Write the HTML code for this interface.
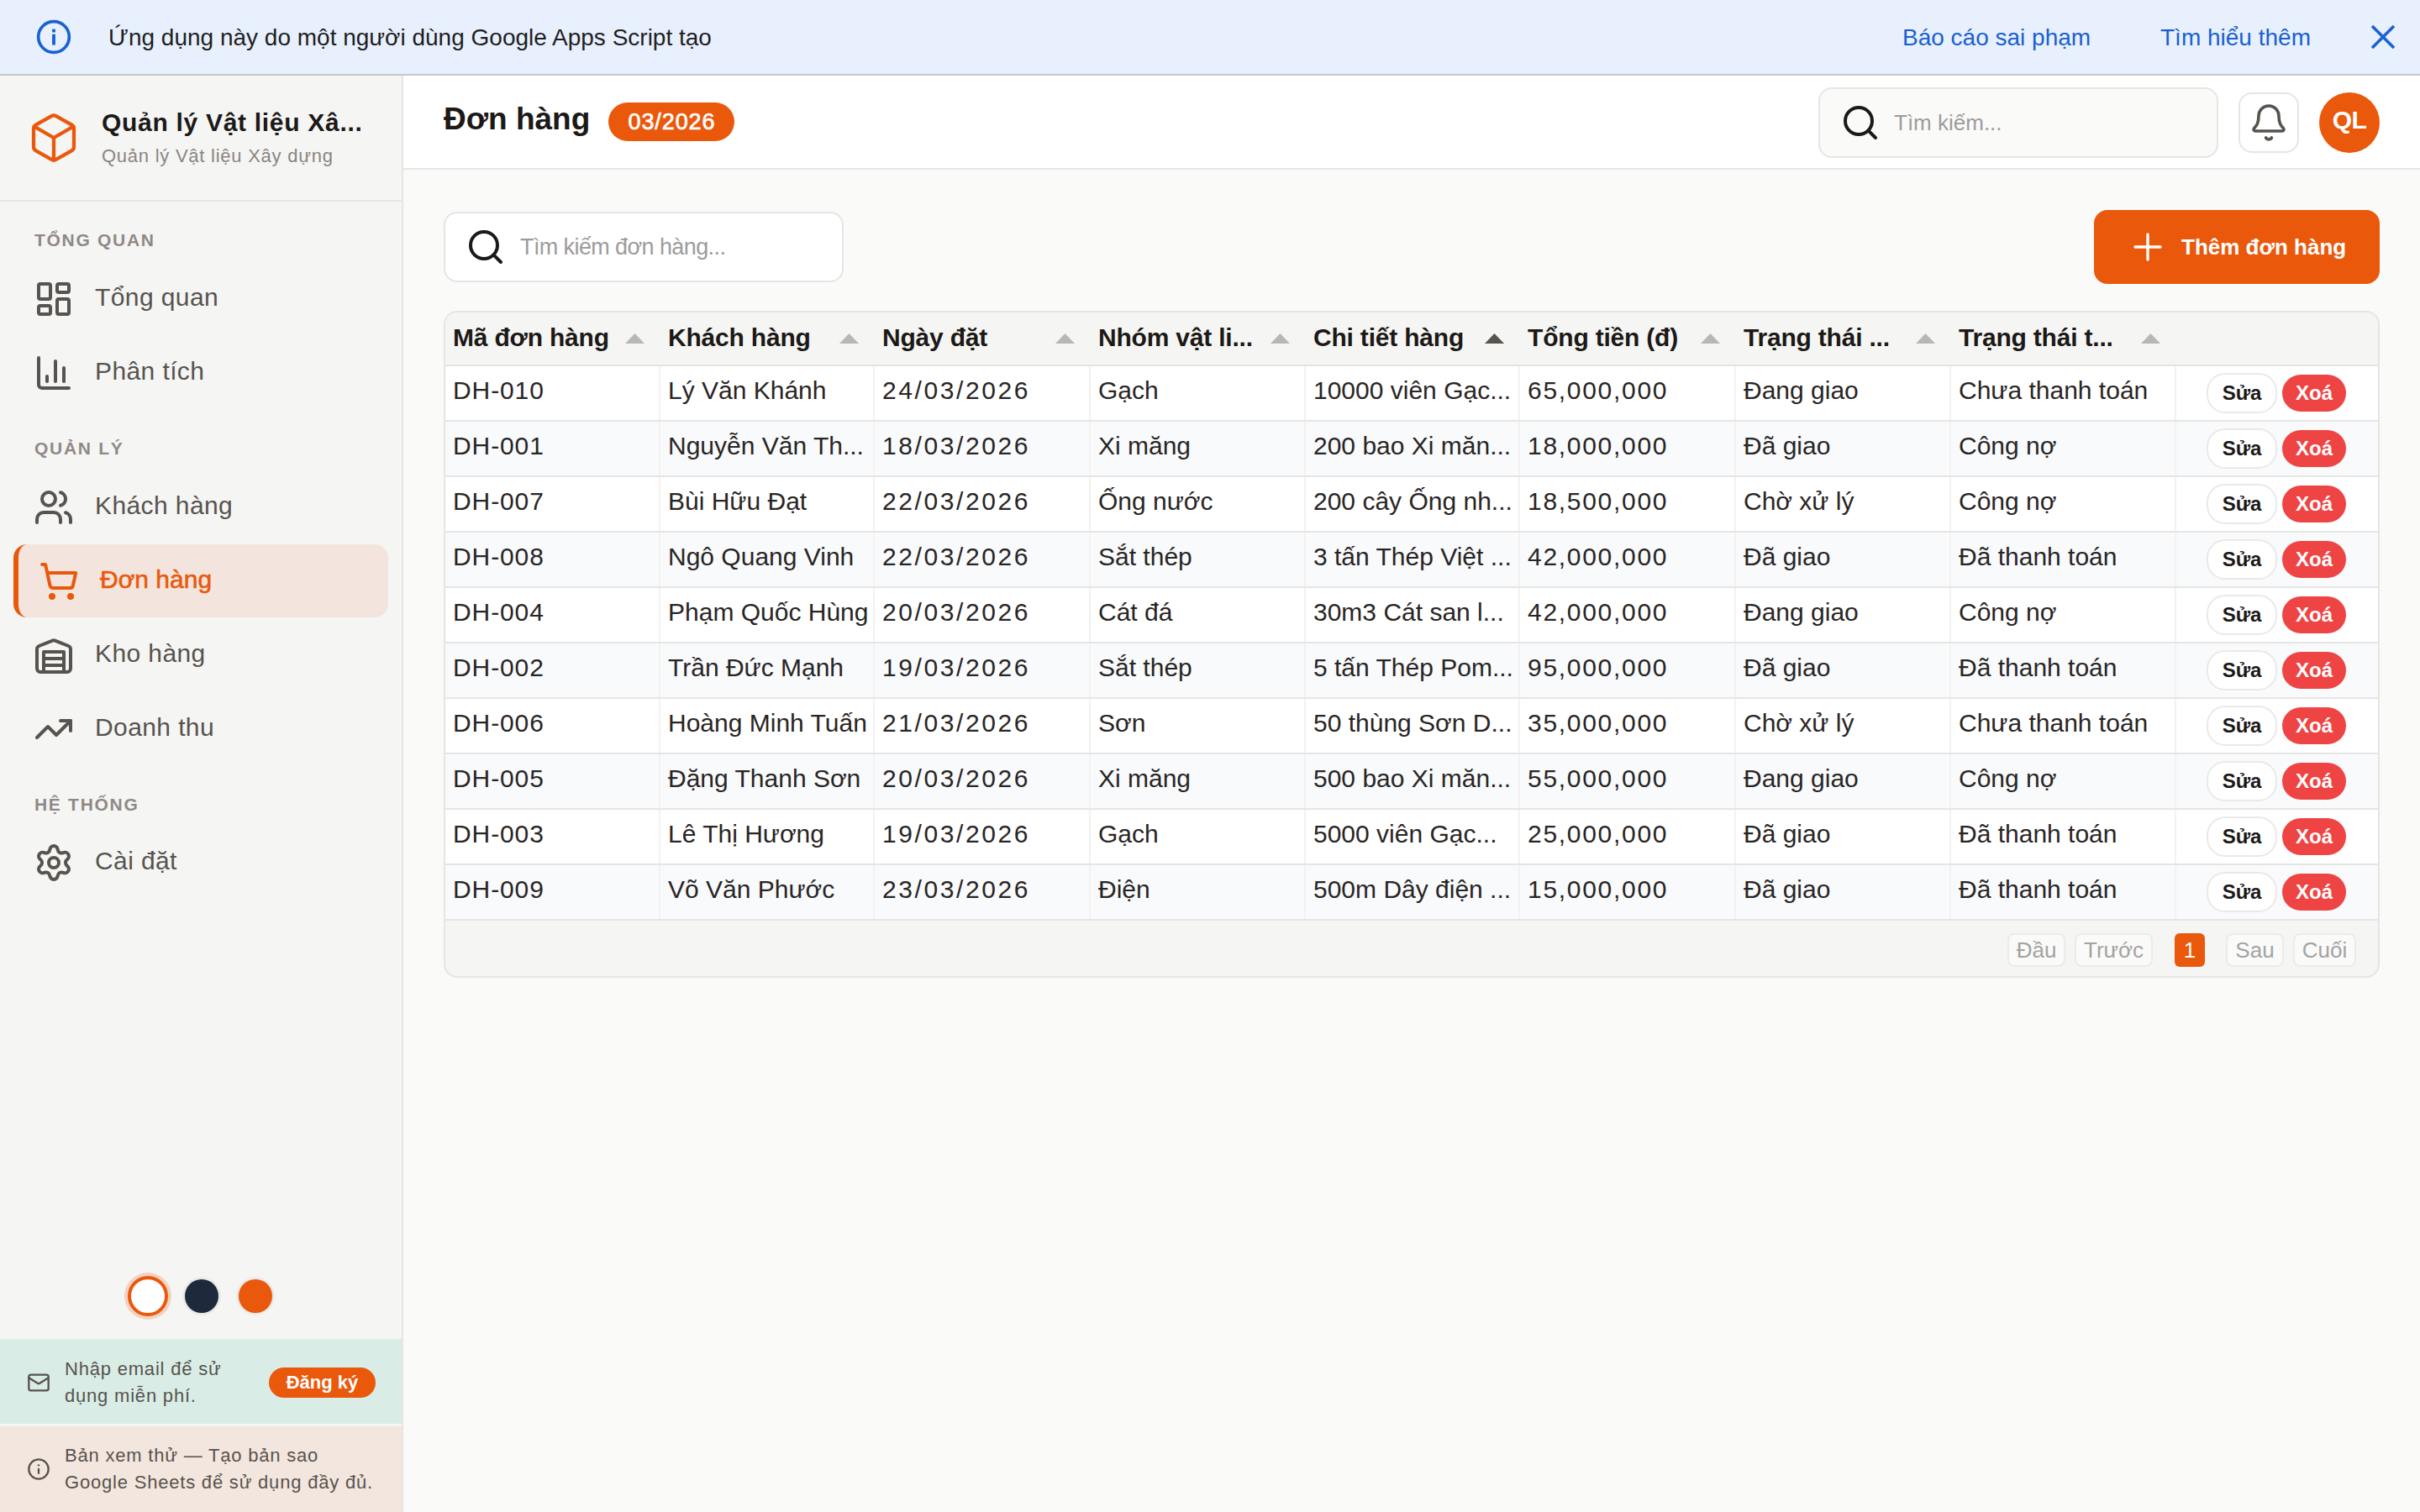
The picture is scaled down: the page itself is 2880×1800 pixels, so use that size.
<!DOCTYPE html>
<html><head><meta charset="utf-8">
<style>
*{box-sizing:border-box;margin:0;padding:0}
html,body{width:2880px;height:1800px;overflow:hidden;background:#fafaf9;font-family:"Liberation Sans",sans-serif;color:#1c1917}
.abs{position:absolute}
svg{display:block}
/* banner */
#banner{position:absolute;left:0;top:0;width:2880px;height:90px;background:#e8f0fe;border-bottom:2px solid #c5c7c9}
#banner .t{position:absolute;left:129px;top:28px;font-size:28px;line-height:34px;color:#1f1f1f;white-space:nowrap}
#banner .l{position:absolute;top:28px;font-size:28px;line-height:34px;color:#1a5fd1;white-space:nowrap}
/* sidebar */
#side{position:absolute;left:0;top:90px;width:480px;height:1710px;background:#f5f5f4;border-right:2px solid #e7e5e4}
#side .hd{position:absolute;left:0;top:0;width:478px;height:150px;border-bottom:2px solid #e7e5e4}
.sec{position:absolute;left:41px;font-size:21px;font-weight:bold;letter-spacing:1.7px;color:#8f8984;white-space:nowrap;line-height:24px}
.nav{position:absolute;left:16px;width:446px;height:88px}
.nav svg{position:absolute;left:24px;top:20px}
.nav .tx{position:absolute;left:97px;top:25px;font-size:30px;line-height:34px;color:#57534e;white-space:nowrap;letter-spacing:0.4px}
.nav.act{background:#f3e5dd;border-radius:16px;border-left:6px solid #ea580c;height:87px}
.nav.act svg{left:24px}
.nav.act .tx{left:97px;color:#ea580c;-webkit-text-stroke:0.6px #ea580c;letter-spacing:0}
/* main */
#hdr{position:absolute;left:480px;top:90px;width:2400px;height:112px;background:#fff;border-bottom:2px solid #e7e5e4}

.th{position:absolute;top:13px;font-size:30px;font-weight:bold;line-height:34px;color:#1c1917;white-space:nowrap;letter-spacing:-0.2px}
.td{position:absolute;font-size:30px;line-height:34px;color:#292524;white-space:nowrap}
.bs{position:absolute;left:2096px;width:84px;height:48px;border:2px solid #ebe9e7;border-radius:22px;background:#fff;font-size:24px;font-weight:bold;line-height:44px;text-align:center;color:#1c1917}
.bx{position:absolute;left:2186px;width:76px;height:44px;border-radius:22px;background:#ef4444;font-size:24px;font-weight:bold;line-height:44px;text-align:center;color:#fff}
.pg{position:absolute;height:40px;border:2px solid #ebebea;border-radius:8px;background:#fafaf9;font-size:26px;line-height:36px;text-align:center;color:#a3a3a3}
</style></head>
<body>
<div id="banner">
  <svg class="abs" style="left:42px;top:22px" width="44" height="44" viewBox="0 0 24 24" fill="none" stroke="#1a62d2" stroke-width="2"><circle cx="12" cy="12" r="10"/><rect x="10.95" y="10.2" width="2.1" height="7" fill="#1a62d2" stroke="none"/><rect x="10.95" y="6.9" width="2.1" height="2.1" fill="#1a62d2" stroke="none"/></svg>
  <div class="t">Ứng dụng này do một người dùng Google Apps Script tạo</div>
  <div class="l" style="left:2264px">Báo cáo sai phạm</div>
  <div class="l" style="left:2571px">Tìm hiểu thêm</div>
  <svg class="abs" style="left:2820px;top:28px" width="32" height="32" viewBox="0 0 32 32" stroke="#1a62d2" stroke-width="3.6"><path d="M3 3L29 29M29 3L3 29"/></svg>
</div>

<div id="side">
  <div class="hd">
    <svg class="abs" style="left:32px;top:42px" width="64" height="64" viewBox="0 0 24 24" fill="none" stroke="#ea580c" stroke-width="1.6" stroke-linecap="round" stroke-linejoin="round"><path d="M21 8a2 2 0 0 0-1-1.73l-7-4a2 2 0 0 0-2 0l-7 4A2 2 0 0 0 3 8v8a2 2 0 0 0 1 1.73l7 4a2 2 0 0 0 2 0l7-4A2 2 0 0 0 21 16Z"/><path d="m3.3 7 8.7 5 8.7-5"/><path d="M12 22V12"/></svg>
    <div class="abs" style="left:121px;top:39px;font-size:30px;font-weight:bold;line-height:34px;color:#1c1917;white-space:nowrap;letter-spacing:0.7px">Quản lý Vật liệu Xâ...</div>
    <div class="abs" style="left:121px;top:83px;font-size:22px;line-height:26px;color:#8b8580;white-space:nowrap;letter-spacing:0.75px">Quản lý Vật liệu Xây dựng</div>
  </div>
  <div class="sec" style="top:184px">TỔNG QUAN</div>
  <div class="nav" style="top:222px">
    <svg width="48" height="48" viewBox="0 0 24 24" fill="none" stroke="#57534e" stroke-width="2" stroke-linecap="round" stroke-linejoin="round"><rect width="7" height="9" x="3" y="3" rx="1"/><rect width="7" height="5" x="14" y="3" rx="1"/><rect width="7" height="9" x="14" y="12" rx="1"/><rect width="7" height="5" x="3" y="16" rx="1"/></svg>
    <div class="tx">Tổng quan</div>
  </div>
  <div class="nav" style="top:310px">
    <svg width="48" height="48" viewBox="0 0 24 24" fill="none" stroke="#57534e" stroke-width="2" stroke-linecap="round" stroke-linejoin="round"><path d="M3 3v16a2 2 0 0 0 2 2h16"/><path d="M18 17V9"/><path d="M13 17V5"/><path d="M8 17v-3"/></svg>
    <div class="tx">Phân tích</div>
  </div>
  <div class="sec" style="top:432px">QUẢN LÝ</div>
  <div class="nav" style="top:470px">
    <svg width="48" height="48" viewBox="0 0 24 24" fill="none" stroke="#57534e" stroke-width="2" stroke-linecap="round" stroke-linejoin="round"><path d="M16 21v-2a4 4 0 0 0-4-4H6a4 4 0 0 0-4 4v2"/><circle cx="9" cy="7" r="4"/><path d="M22 21v-2a4 4 0 0 0-3-3.87"/><path d="M16 3.13a4 4 0 0 1 0 7.75"/></svg>
    <div class="tx">Khách hàng</div>
  </div>
  <div class="nav act" style="top:558px">
    <svg width="48" height="48" viewBox="0 0 24 24" fill="none" stroke="#ea580c" stroke-width="2" stroke-linecap="round" stroke-linejoin="round"><circle cx="8" cy="21" r="1"/><circle cx="19" cy="21" r="1"/><path d="M2.05 2.05h2l2.66 12.42a2 2 0 0 0 2 1.58h9.78a2 2 0 0 0 1.95-1.57l1.65-7.43H5.12"/></svg>
    <div class="tx">Đơn hàng</div>
  </div>
  <div class="nav" style="top:646px">
    <svg width="48" height="48" viewBox="0 0 24 24" fill="none" stroke="#57534e" stroke-width="2" stroke-linecap="round" stroke-linejoin="round"><path d="M22 8.35V20a2 2 0 0 1-2 2H4a2 2 0 0 1-2-2V8.35A2 2 0 0 1 3.26 6.5l8-3.2a2 2 0 0 1 1.48 0l8 3.2A2 2 0 0 1 22 8.35Z"/><path d="M6 18h12"/><path d="M6 14h12"/><rect width="12" height="12" x="6" y="10"/></svg>
    <div class="tx">Kho hàng</div>
  </div>
  <div class="nav" style="top:734px">
    <svg width="48" height="48" viewBox="0 0 24 24" fill="none" stroke="#57534e" stroke-width="2" stroke-linecap="round" stroke-linejoin="round"><polyline points="22 7 13.5 15.5 8.5 10.5 2 17"/><polyline points="16 7 22 7 22 13"/></svg>
    <div class="tx">Doanh thu</div>
  </div>
  <div class="sec" style="top:856px">HỆ THỐNG</div>
  <div class="nav" style="top:893px">
    <svg width="48" height="48" viewBox="0 0 24 24" fill="none" stroke="#57534e" stroke-width="2" stroke-linecap="round" stroke-linejoin="round"><path d="M9.671 4.136a2.34 2.34 0 0 1 4.659 0 2.34 2.34 0 0 0 3.319 1.915 2.34 2.34 0 0 1 2.33 4.033 2.34 2.34 0 0 0 0 3.831 2.34 2.34 0 0 1-2.33 4.033 2.34 2.34 0 0 0-3.319 1.915 2.34 2.34 0 0 1-4.659 0 2.34 2.34 0 0 0-3.32-1.915 2.34 2.34 0 0 1-2.33-4.033 2.34 2.34 0 0 0 0-3.831A2.34 2.34 0 0 1 6.35 6.051a2.34 2.34 0 0 0 3.319-1.915"/><circle cx="12" cy="12" r="3"/></svg>
    <div class="tx">Cài đặt</div>
  </div>

  <div class="abs" style="left:152px;top:1429px;width:48px;height:48px;border-radius:50%;background:#fff;border:4px solid #ea580c;box-shadow:0 0 0 4px rgba(234,88,12,0.22)"></div>
  <div class="abs" style="left:220px;top:1433px;width:40px;height:40px;border-radius:50%;background:#1e293b;box-shadow:0 0 3px 2px rgba(0,0,0,0.08)"></div>
  <div class="abs" style="left:284px;top:1433px;width:40px;height:40px;border-radius:50%;background:#ea580c;box-shadow:0 0 3px 2px rgba(0,0,0,0.08)"></div>
  <div class="abs" style="left:0;top:1504px;width:478px;height:101px;background:#d9ede6">
    <svg class="abs" style="left:32px;top:38px" width="28" height="28" viewBox="0 0 24 24" fill="none" stroke="#57534e" stroke-width="2" stroke-linecap="round" stroke-linejoin="round"><rect width="20" height="16" x="2" y="4" rx="2"/><path d="m22 7-8.97 5.7a1.94 1.94 0 0 1-2.06 0L2 7"/></svg>
    <div class="abs" style="left:77px;top:20px;font-size:22px;line-height:32px;color:#57534e;width:260px;letter-spacing:0.8px">Nhập email để sử<br>dụng miễn phí.</div>
    <div class="abs" style="left:320px;top:34px;width:127px;height:36px;border-radius:18px;background:#ea580c;color:#fff;font-size:22px;font-weight:bold;line-height:36px;text-align:center">Đăng ký</div>
  </div>
  <div class="abs" style="left:0;top:1605px;width:478px;height:3px;background:#f5f5f4"></div>
  <div class="abs" style="left:0;top:1608px;width:478px;height:102px;background:#f3e6de">
    <svg class="abs" style="left:32px;top:37px" width="28" height="28" viewBox="0 0 24 24" fill="none" stroke="#57534e" stroke-width="2" stroke-linecap="round" stroke-linejoin="round"><circle cx="12" cy="12" r="10"/><path d="M12 16v-4"/><path d="M12 8h.01"/></svg>
    <div class="abs" style="left:77px;top:19px;font-size:22px;line-height:32px;color:#57534e;white-space:nowrap;letter-spacing:0.8px">Bản xem thử — Tạo bản sao<br>Google Sheets để sử dụng đầy đủ.</div>
  </div>
</div>


<div id="hdr">
  <div class="abs" style="left:48px;top:30px;font-size:37px;font-weight:bold;line-height:44px;color:#1c1917;white-space:nowrap">Đơn hàng</div>
  <div class="abs" style="left:244px;top:32px;width:150px;height:46px;border-radius:23px;background:#ea580c;color:#fff;font-size:27px;line-height:46px;text-align:center;letter-spacing:0.9px;text-indent:0.9px;-webkit-text-stroke:0.7px #fff">03/2026</div>
  <div class="abs" style="left:1684px;top:14px;width:476px;height:84px;border-radius:16px;background:#fafaf9;border:2px solid #e7e5e4">
    <svg class="abs" style="left:24px;top:16px" width="48" height="48" viewBox="0 0 24 24" fill="none" stroke="#1c1917" stroke-width="2" stroke-linecap="round" stroke-linejoin="round"><circle cx="11" cy="11" r="8"/><path d="m21 21-4.3-4.3"/></svg>
    <div class="abs" style="left:88px;top:24px;font-size:26px;line-height:32px;color:#9c9c9c;white-space:nowrap">Tìm kiếm...</div>
  </div>
  <div class="abs" style="left:2184px;top:20px;width:72px;height:72px;border-radius:16px;background:#fff;border:2px solid #e7e5e4">
    <svg class="abs" style="left:10px;top:10px" width="48" height="48" viewBox="0 0 24 24" fill="none" stroke="#57534e" stroke-width="1.8" stroke-linecap="round" stroke-linejoin="round"><path d="M10.268 21a2 2 0 0 0 3.464 0"/><path d="M3.262 15.326A1 1 0 0 0 4 17h16a1 1 0 0 0 .74-1.673C19.41 13.956 18 12.499 18 8A6 6 0 0 0 6 8c0 4.499-1.411 5.956-2.738 7.326"/></svg>
  </div>
  <div class="abs" style="left:2280px;top:20px;width:72px;height:72px;border-radius:50%;background:#ea580c;color:#fff;font-size:30px;font-weight:bold;line-height:66px;text-align:center;letter-spacing:-0.5px">QL</div>
</div>

<div class="abs" style="left:528px;top:252px;width:476px;height:84px;border-radius:16px;background:#fff;border:2px solid #e7e5e4">
  <svg class="abs" style="left:24px;top:16px" width="48" height="48" viewBox="0 0 24 24" fill="none" stroke="#1c1917" stroke-width="2" stroke-linecap="round" stroke-linejoin="round"><circle cx="11" cy="11" r="8"/><path d="m21 21-4.3-4.3"/></svg>
  <div class="abs" style="left:89px;top:24px;font-size:27px;line-height:32px;color:#9c9c9c;white-space:nowrap;letter-spacing:-0.6px">Tìm kiếm đơn hàng...</div>
</div>
<div class="abs" style="left:2492px;top:250px;width:340px;height:88px;border-radius:16px;background:#ea580c;color:#fff">
  <svg class="abs" style="left:44px;top:24px" width="40" height="40" viewBox="0 0 24 24" fill="none" stroke="#fff" stroke-width="2" stroke-linecap="round"><path d="M12 3v18M3 12h18"/></svg>
  <div class="abs" style="left:104px;top:28px;font-size:26px;font-weight:bold;line-height:32px;white-space:nowrap">Thêm đơn hàng</div>
</div>

<div id="tbl" style="position:absolute;left:528px;top:370px;width:2304px;height:794px;border:2px solid #e7e5e4;border-radius:16px;overflow:hidden;background:#f5f5f4">
<div class="abs" style="left:0;top:0;width:2300px;height:64px;background:#f5f5f4;border-bottom:2px solid #e7e5e4"></div>
<div class="th" style="left:9px">Mã đơn hàng</div>
<svg class="abs" style="left:214px;top:25px" width="23" height="12" viewBox="0 0 23 12"><path d="M11.5 0L23 12H0Z" fill="#b9b7b5"/></svg>
<div class="th" style="left:265px">Khách hàng</div>
<svg class="abs" style="left:469px;top:25px" width="23" height="12" viewBox="0 0 23 12"><path d="M11.5 0L23 12H0Z" fill="#b9b7b5"/></svg>
<div class="th" style="left:520px">Ngày đặt</div>
<svg class="abs" style="left:726px;top:25px" width="23" height="12" viewBox="0 0 23 12"><path d="M11.5 0L23 12H0Z" fill="#b9b7b5"/></svg>
<div class="th" style="left:777px">Nhóm vật li...</div>
<svg class="abs" style="left:982px;top:25px" width="23" height="12" viewBox="0 0 23 12"><path d="M11.5 0L23 12H0Z" fill="#b9b7b5"/></svg>
<div class="th" style="left:1033px">Chi tiết hàng</div>
<svg class="abs" style="left:1237px;top:25px" width="23" height="12" viewBox="0 0 23 12"><path d="M11.5 0L23 12H0Z" fill="#57534e"/></svg>
<div class="th" style="left:1288px">Tổng tiền (đ)</div>
<svg class="abs" style="left:1494px;top:25px" width="23" height="12" viewBox="0 0 23 12"><path d="M11.5 0L23 12H0Z" fill="#b9b7b5"/></svg>
<div class="th" style="left:1545px">Trạng thái ...</div>
<svg class="abs" style="left:1750px;top:25px" width="23" height="12" viewBox="0 0 23 12"><path d="M11.5 0L23 12H0Z" fill="#b9b7b5"/></svg>
<div class="th" style="left:1801px">Trạng thái t...</div>
<svg class="abs" style="left:2018px;top:25px" width="23" height="12" viewBox="0 0 23 12"><path d="M11.5 0L23 12H0Z" fill="#b9b7b5"/></svg>
<div class="abs" style="left:0;top:64px;width:2300px;height:66px;background:#fff;border-bottom:2px solid #e7e5e4"></div>
<div class="abs" style="left:254px;top:64px;width:2px;height:64px;background:#f3f2f1"></div>
<div class="abs" style="left:509px;top:64px;width:2px;height:64px;background:#f3f2f1"></div>
<div class="abs" style="left:766px;top:64px;width:2px;height:64px;background:#f3f2f1"></div>
<div class="abs" style="left:1022px;top:64px;width:2px;height:64px;background:#f3f2f1"></div>
<div class="abs" style="left:1277px;top:64px;width:2px;height:64px;background:#f3f2f1"></div>
<div class="abs" style="left:1534px;top:64px;width:2px;height:64px;background:#f3f2f1"></div>
<div class="abs" style="left:1790px;top:64px;width:2px;height:64px;background:#f3f2f1"></div>
<div class="abs" style="left:2058px;top:64px;width:2px;height:64px;background:#f3f2f1"></div>
<div class="td" style="letter-spacing:0.9px;left:9px;top:76px">DH-010</div>
<div class="td" style="left:265px;top:76px">Lý Văn Khánh</div>
<div class="td" style="letter-spacing:2.6px;left:520px;top:76px">24/03/2026</div>
<div class="td" style="left:777px;top:76px">Gạch</div>
<div class="td" style="left:1033px;top:76px">10000 viên Gạc...</div>
<div class="td" style="letter-spacing:1.7px;left:1288px;top:76px">65,000,000</div>
<div class="td" style="left:1545px;top:76px">Đang giao</div>
<div class="td" style="left:1801px;top:76px">Chưa thanh toán</div>
<div class="bs" style="top:72px">Sửa</div>
<div class="bx" style="top:74px">Xoá</div>
<div class="abs" style="left:0;top:130px;width:2300px;height:66px;background:#f8fafc;border-bottom:2px solid #e7e5e4"></div>
<div class="abs" style="left:254px;top:130px;width:2px;height:64px;background:#f3f2f1"></div>
<div class="abs" style="left:509px;top:130px;width:2px;height:64px;background:#f3f2f1"></div>
<div class="abs" style="left:766px;top:130px;width:2px;height:64px;background:#f3f2f1"></div>
<div class="abs" style="left:1022px;top:130px;width:2px;height:64px;background:#f3f2f1"></div>
<div class="abs" style="left:1277px;top:130px;width:2px;height:64px;background:#f3f2f1"></div>
<div class="abs" style="left:1534px;top:130px;width:2px;height:64px;background:#f3f2f1"></div>
<div class="abs" style="left:1790px;top:130px;width:2px;height:64px;background:#f3f2f1"></div>
<div class="abs" style="left:2058px;top:130px;width:2px;height:64px;background:#f3f2f1"></div>
<div class="td" style="letter-spacing:0.9px;left:9px;top:142px">DH-001</div>
<div class="td" style="left:265px;top:142px">Nguyễn Văn Th...</div>
<div class="td" style="letter-spacing:2.6px;left:520px;top:142px">18/03/2026</div>
<div class="td" style="left:777px;top:142px">Xi măng</div>
<div class="td" style="left:1033px;top:142px">200 bao Xi măn...</div>
<div class="td" style="letter-spacing:1.7px;left:1288px;top:142px">18,000,000</div>
<div class="td" style="left:1545px;top:142px">Đã giao</div>
<div class="td" style="left:1801px;top:142px">Công nợ</div>
<div class="bs" style="top:138px">Sửa</div>
<div class="bx" style="top:140px">Xoá</div>
<div class="abs" style="left:0;top:196px;width:2300px;height:66px;background:#fff;border-bottom:2px solid #e7e5e4"></div>
<div class="abs" style="left:254px;top:196px;width:2px;height:64px;background:#f3f2f1"></div>
<div class="abs" style="left:509px;top:196px;width:2px;height:64px;background:#f3f2f1"></div>
<div class="abs" style="left:766px;top:196px;width:2px;height:64px;background:#f3f2f1"></div>
<div class="abs" style="left:1022px;top:196px;width:2px;height:64px;background:#f3f2f1"></div>
<div class="abs" style="left:1277px;top:196px;width:2px;height:64px;background:#f3f2f1"></div>
<div class="abs" style="left:1534px;top:196px;width:2px;height:64px;background:#f3f2f1"></div>
<div class="abs" style="left:1790px;top:196px;width:2px;height:64px;background:#f3f2f1"></div>
<div class="abs" style="left:2058px;top:196px;width:2px;height:64px;background:#f3f2f1"></div>
<div class="td" style="letter-spacing:0.9px;left:9px;top:208px">DH-007</div>
<div class="td" style="left:265px;top:208px">Bùi Hữu Đạt</div>
<div class="td" style="letter-spacing:2.6px;left:520px;top:208px">22/03/2026</div>
<div class="td" style="left:777px;top:208px">Ống nước</div>
<div class="td" style="left:1033px;top:208px">200 cây Ống nh...</div>
<div class="td" style="letter-spacing:1.7px;left:1288px;top:208px">18,500,000</div>
<div class="td" style="left:1545px;top:208px">Chờ xử lý</div>
<div class="td" style="left:1801px;top:208px">Công nợ</div>
<div class="bs" style="top:204px">Sửa</div>
<div class="bx" style="top:206px">Xoá</div>
<div class="abs" style="left:0;top:262px;width:2300px;height:66px;background:#f8fafc;border-bottom:2px solid #e7e5e4"></div>
<div class="abs" style="left:254px;top:262px;width:2px;height:64px;background:#f3f2f1"></div>
<div class="abs" style="left:509px;top:262px;width:2px;height:64px;background:#f3f2f1"></div>
<div class="abs" style="left:766px;top:262px;width:2px;height:64px;background:#f3f2f1"></div>
<div class="abs" style="left:1022px;top:262px;width:2px;height:64px;background:#f3f2f1"></div>
<div class="abs" style="left:1277px;top:262px;width:2px;height:64px;background:#f3f2f1"></div>
<div class="abs" style="left:1534px;top:262px;width:2px;height:64px;background:#f3f2f1"></div>
<div class="abs" style="left:1790px;top:262px;width:2px;height:64px;background:#f3f2f1"></div>
<div class="abs" style="left:2058px;top:262px;width:2px;height:64px;background:#f3f2f1"></div>
<div class="td" style="letter-spacing:0.9px;left:9px;top:274px">DH-008</div>
<div class="td" style="left:265px;top:274px">Ngô Quang Vinh</div>
<div class="td" style="letter-spacing:2.6px;left:520px;top:274px">22/03/2026</div>
<div class="td" style="left:777px;top:274px">Sắt thép</div>
<div class="td" style="left:1033px;top:274px">3 tấn Thép Việt ...</div>
<div class="td" style="letter-spacing:1.7px;left:1288px;top:274px">42,000,000</div>
<div class="td" style="left:1545px;top:274px">Đã giao</div>
<div class="td" style="left:1801px;top:274px">Đã thanh toán</div>
<div class="bs" style="top:270px">Sửa</div>
<div class="bx" style="top:272px">Xoá</div>
<div class="abs" style="left:0;top:328px;width:2300px;height:66px;background:#fff;border-bottom:2px solid #e7e5e4"></div>
<div class="abs" style="left:254px;top:328px;width:2px;height:64px;background:#f3f2f1"></div>
<div class="abs" style="left:509px;top:328px;width:2px;height:64px;background:#f3f2f1"></div>
<div class="abs" style="left:766px;top:328px;width:2px;height:64px;background:#f3f2f1"></div>
<div class="abs" style="left:1022px;top:328px;width:2px;height:64px;background:#f3f2f1"></div>
<div class="abs" style="left:1277px;top:328px;width:2px;height:64px;background:#f3f2f1"></div>
<div class="abs" style="left:1534px;top:328px;width:2px;height:64px;background:#f3f2f1"></div>
<div class="abs" style="left:1790px;top:328px;width:2px;height:64px;background:#f3f2f1"></div>
<div class="abs" style="left:2058px;top:328px;width:2px;height:64px;background:#f3f2f1"></div>
<div class="td" style="letter-spacing:0.9px;left:9px;top:340px">DH-004</div>
<div class="td" style="left:265px;top:340px">Phạm Quốc Hùng</div>
<div class="td" style="letter-spacing:2.6px;left:520px;top:340px">20/03/2026</div>
<div class="td" style="left:777px;top:340px">Cát đá</div>
<div class="td" style="left:1033px;top:340px">30m3 Cát san l...</div>
<div class="td" style="letter-spacing:1.7px;left:1288px;top:340px">42,000,000</div>
<div class="td" style="left:1545px;top:340px">Đang giao</div>
<div class="td" style="left:1801px;top:340px">Công nợ</div>
<div class="bs" style="top:336px">Sửa</div>
<div class="bx" style="top:338px">Xoá</div>
<div class="abs" style="left:0;top:394px;width:2300px;height:66px;background:#f8fafc;border-bottom:2px solid #e7e5e4"></div>
<div class="abs" style="left:254px;top:394px;width:2px;height:64px;background:#f3f2f1"></div>
<div class="abs" style="left:509px;top:394px;width:2px;height:64px;background:#f3f2f1"></div>
<div class="abs" style="left:766px;top:394px;width:2px;height:64px;background:#f3f2f1"></div>
<div class="abs" style="left:1022px;top:394px;width:2px;height:64px;background:#f3f2f1"></div>
<div class="abs" style="left:1277px;top:394px;width:2px;height:64px;background:#f3f2f1"></div>
<div class="abs" style="left:1534px;top:394px;width:2px;height:64px;background:#f3f2f1"></div>
<div class="abs" style="left:1790px;top:394px;width:2px;height:64px;background:#f3f2f1"></div>
<div class="abs" style="left:2058px;top:394px;width:2px;height:64px;background:#f3f2f1"></div>
<div class="td" style="letter-spacing:0.9px;left:9px;top:406px">DH-002</div>
<div class="td" style="left:265px;top:406px">Trần Đức Mạnh</div>
<div class="td" style="letter-spacing:2.6px;left:520px;top:406px">19/03/2026</div>
<div class="td" style="left:777px;top:406px">Sắt thép</div>
<div class="td" style="left:1033px;top:406px">5 tấn Thép Pom...</div>
<div class="td" style="letter-spacing:1.7px;left:1288px;top:406px">95,000,000</div>
<div class="td" style="left:1545px;top:406px">Đã giao</div>
<div class="td" style="left:1801px;top:406px">Đã thanh toán</div>
<div class="bs" style="top:402px">Sửa</div>
<div class="bx" style="top:404px">Xoá</div>
<div class="abs" style="left:0;top:460px;width:2300px;height:66px;background:#fff;border-bottom:2px solid #e7e5e4"></div>
<div class="abs" style="left:254px;top:460px;width:2px;height:64px;background:#f3f2f1"></div>
<div class="abs" style="left:509px;top:460px;width:2px;height:64px;background:#f3f2f1"></div>
<div class="abs" style="left:766px;top:460px;width:2px;height:64px;background:#f3f2f1"></div>
<div class="abs" style="left:1022px;top:460px;width:2px;height:64px;background:#f3f2f1"></div>
<div class="abs" style="left:1277px;top:460px;width:2px;height:64px;background:#f3f2f1"></div>
<div class="abs" style="left:1534px;top:460px;width:2px;height:64px;background:#f3f2f1"></div>
<div class="abs" style="left:1790px;top:460px;width:2px;height:64px;background:#f3f2f1"></div>
<div class="abs" style="left:2058px;top:460px;width:2px;height:64px;background:#f3f2f1"></div>
<div class="td" style="letter-spacing:0.9px;left:9px;top:472px">DH-006</div>
<div class="td" style="left:265px;top:472px">Hoàng Minh Tuấn</div>
<div class="td" style="letter-spacing:2.6px;left:520px;top:472px">21/03/2026</div>
<div class="td" style="left:777px;top:472px">Sơn</div>
<div class="td" style="left:1033px;top:472px">50 thùng Sơn D...</div>
<div class="td" style="letter-spacing:1.7px;left:1288px;top:472px">35,000,000</div>
<div class="td" style="left:1545px;top:472px">Chờ xử lý</div>
<div class="td" style="left:1801px;top:472px">Chưa thanh toán</div>
<div class="bs" style="top:468px">Sửa</div>
<div class="bx" style="top:470px">Xoá</div>
<div class="abs" style="left:0;top:526px;width:2300px;height:66px;background:#f8fafc;border-bottom:2px solid #e7e5e4"></div>
<div class="abs" style="left:254px;top:526px;width:2px;height:64px;background:#f3f2f1"></div>
<div class="abs" style="left:509px;top:526px;width:2px;height:64px;background:#f3f2f1"></div>
<div class="abs" style="left:766px;top:526px;width:2px;height:64px;background:#f3f2f1"></div>
<div class="abs" style="left:1022px;top:526px;width:2px;height:64px;background:#f3f2f1"></div>
<div class="abs" style="left:1277px;top:526px;width:2px;height:64px;background:#f3f2f1"></div>
<div class="abs" style="left:1534px;top:526px;width:2px;height:64px;background:#f3f2f1"></div>
<div class="abs" style="left:1790px;top:526px;width:2px;height:64px;background:#f3f2f1"></div>
<div class="abs" style="left:2058px;top:526px;width:2px;height:64px;background:#f3f2f1"></div>
<div class="td" style="letter-spacing:0.9px;left:9px;top:538px">DH-005</div>
<div class="td" style="left:265px;top:538px">Đặng Thanh Sơn</div>
<div class="td" style="letter-spacing:2.6px;left:520px;top:538px">20/03/2026</div>
<div class="td" style="left:777px;top:538px">Xi măng</div>
<div class="td" style="left:1033px;top:538px">500 bao Xi măn...</div>
<div class="td" style="letter-spacing:1.7px;left:1288px;top:538px">55,000,000</div>
<div class="td" style="left:1545px;top:538px">Đang giao</div>
<div class="td" style="left:1801px;top:538px">Công nợ</div>
<div class="bs" style="top:534px">Sửa</div>
<div class="bx" style="top:536px">Xoá</div>
<div class="abs" style="left:0;top:592px;width:2300px;height:66px;background:#fff;border-bottom:2px solid #e7e5e4"></div>
<div class="abs" style="left:254px;top:592px;width:2px;height:64px;background:#f3f2f1"></div>
<div class="abs" style="left:509px;top:592px;width:2px;height:64px;background:#f3f2f1"></div>
<div class="abs" style="left:766px;top:592px;width:2px;height:64px;background:#f3f2f1"></div>
<div class="abs" style="left:1022px;top:592px;width:2px;height:64px;background:#f3f2f1"></div>
<div class="abs" style="left:1277px;top:592px;width:2px;height:64px;background:#f3f2f1"></div>
<div class="abs" style="left:1534px;top:592px;width:2px;height:64px;background:#f3f2f1"></div>
<div class="abs" style="left:1790px;top:592px;width:2px;height:64px;background:#f3f2f1"></div>
<div class="abs" style="left:2058px;top:592px;width:2px;height:64px;background:#f3f2f1"></div>
<div class="td" style="letter-spacing:0.9px;left:9px;top:604px">DH-003</div>
<div class="td" style="left:265px;top:604px">Lê Thị Hương</div>
<div class="td" style="letter-spacing:2.6px;left:520px;top:604px">19/03/2026</div>
<div class="td" style="left:777px;top:604px">Gạch</div>
<div class="td" style="left:1033px;top:604px">5000 viên Gạc...</div>
<div class="td" style="letter-spacing:1.7px;left:1288px;top:604px">25,000,000</div>
<div class="td" style="left:1545px;top:604px">Đã giao</div>
<div class="td" style="left:1801px;top:604px">Đã thanh toán</div>
<div class="bs" style="top:600px">Sửa</div>
<div class="bx" style="top:602px">Xoá</div>
<div class="abs" style="left:0;top:658px;width:2300px;height:66px;background:#f8fafc;border-bottom:2px solid #e7e5e4"></div>
<div class="abs" style="left:254px;top:658px;width:2px;height:64px;background:#f3f2f1"></div>
<div class="abs" style="left:509px;top:658px;width:2px;height:64px;background:#f3f2f1"></div>
<div class="abs" style="left:766px;top:658px;width:2px;height:64px;background:#f3f2f1"></div>
<div class="abs" style="left:1022px;top:658px;width:2px;height:64px;background:#f3f2f1"></div>
<div class="abs" style="left:1277px;top:658px;width:2px;height:64px;background:#f3f2f1"></div>
<div class="abs" style="left:1534px;top:658px;width:2px;height:64px;background:#f3f2f1"></div>
<div class="abs" style="left:1790px;top:658px;width:2px;height:64px;background:#f3f2f1"></div>
<div class="abs" style="left:2058px;top:658px;width:2px;height:64px;background:#f3f2f1"></div>
<div class="td" style="letter-spacing:0.9px;left:9px;top:670px">DH-009</div>
<div class="td" style="left:265px;top:670px">Võ Văn Phước</div>
<div class="td" style="letter-spacing:2.6px;left:520px;top:670px">23/03/2026</div>
<div class="td" style="left:777px;top:670px">Điện</div>
<div class="td" style="left:1033px;top:670px">500m Dây điện ...</div>
<div class="td" style="letter-spacing:1.7px;left:1288px;top:670px">15,000,000</div>
<div class="td" style="left:1545px;top:670px">Đã giao</div>
<div class="td" style="left:1801px;top:670px">Đã thanh toán</div>
<div class="bs" style="top:666px">Sửa</div>
<div class="bx" style="top:668px">Xoá</div>
<div class="pg" style="left:1859px;top:739px;width:69px">Đầu</div>
<div class="pg" style="left:1939px;top:739px;width:93px">Trước</div>
<div class="pg" style="left:2119px;top:739px;width:69px">Sau</div>
<div class="pg" style="left:2199px;top:739px;width:75px">Cuối</div>
<div class="abs" style="left:2058px;top:739px;width:36px;height:40px;border-radius:6px;background:#ea580c;color:#fff;font-size:26px;line-height:40px;text-align:center">1</div>
</div>
</body></html>
